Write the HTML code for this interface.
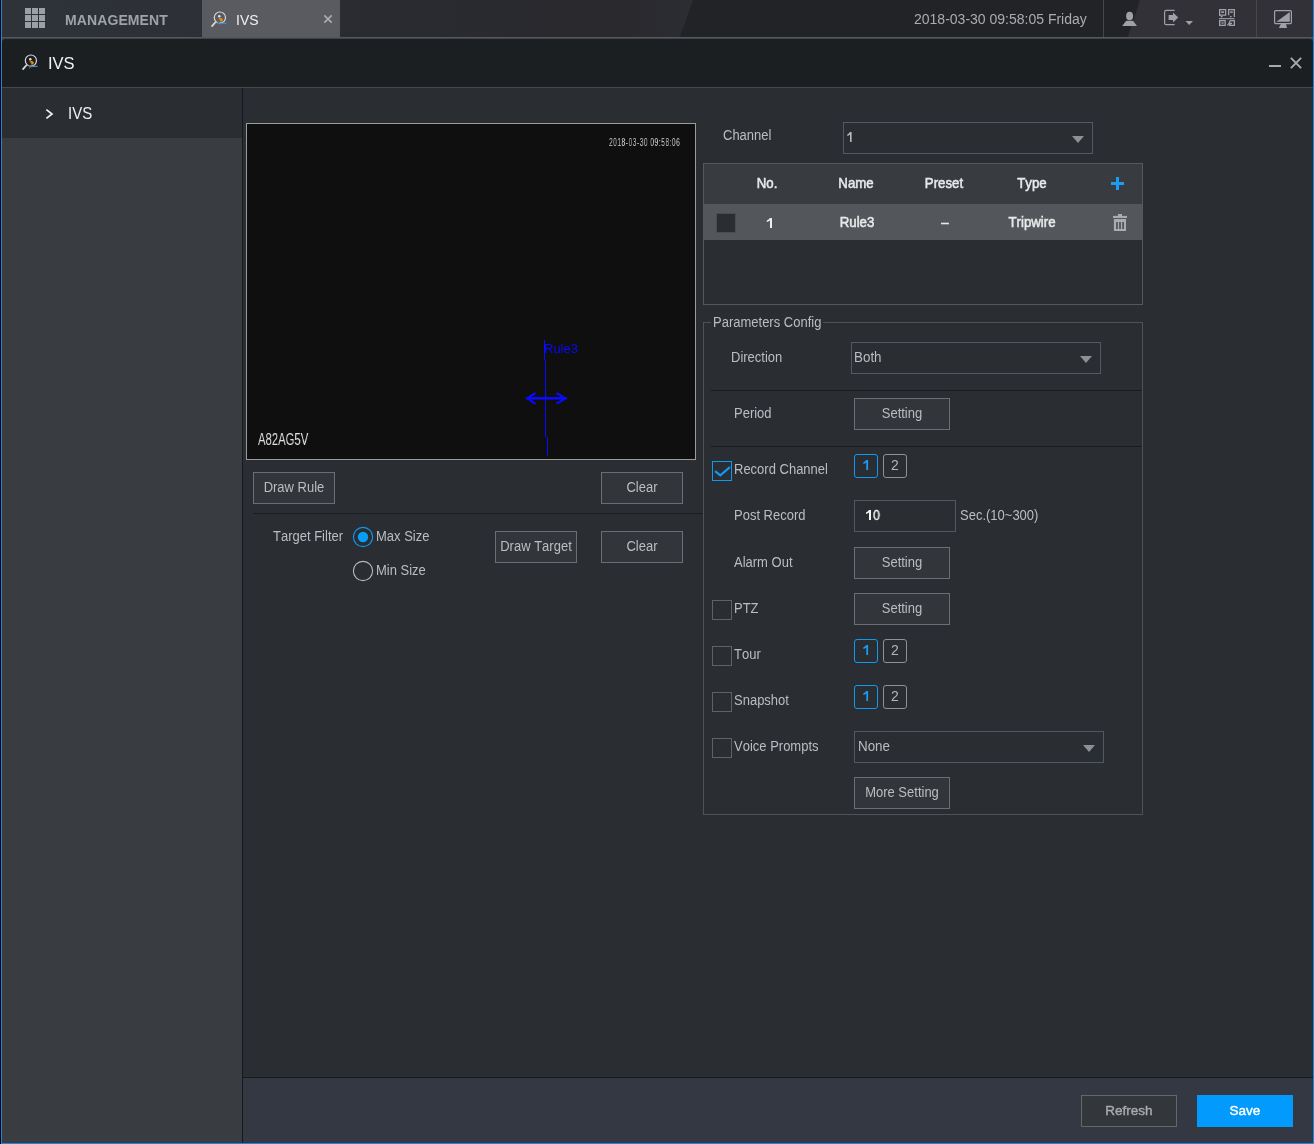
<!DOCTYPE html>
<html><head><meta charset="utf-8">
<style>
*{margin:0;padding:0;box-sizing:border-box}
html,body{width:1314px;height:1144px;overflow:hidden;background:#000;font-family:"Liberation Sans",sans-serif}
body{-webkit-font-smoothing:antialiased;font-kerning:none}
.lbl,.btn,.sel,.hd,.cb,.a{will-change:transform}
.a{position:absolute}
#frame{position:absolute;left:1px;top:0;width:1313px;height:1144px;border-left:1px solid #1a86dc;border-right:1px solid #1a86dc;border-bottom:1px solid #1a86dc;background:#2a2d32}
#topline{position:absolute;left:2px;top:37px;width:1311px;height:1px;background:#55575b}
#topline2{position:absolute;left:2px;top:38px;width:1311px;height:4px;background:#40454c}
#modal{position:absolute;left:2px;top:39px;width:1311px;height:1104px;background:#2a2d32;border-radius:4px 4px 0 0;overflow:hidden}
#mhead{position:absolute;left:0;top:0;width:1311px;height:48px;background:#1c1f22}
#mline{position:absolute;left:0;top:48px;width:1311px;height:1px;background:#45484d}
#side{position:absolute;left:0;top:49px;width:240px;height:1055px;background:#393c41}
#sideitem{position:absolute;left:0;top:49px;width:240px;height:50px;background:#2a2d32}
#vdiv{position:absolute;left:240px;top:49px;width:1px;height:1055px;background:#15181e}
#footer{position:absolute;left:241px;top:1038px;width:1070px;height:66px;background:#343842;border-top:1px solid #151a22}
.lbl{position:absolute;color:#babdc2;font-size:13px;white-space:nowrap;line-height:15px;transform:scaleY(1.1);transform-origin:0 12px}
.btn{position:absolute;background:#32363b;border:1px solid #6b6e74;color:#babdc2;font-size:13px;text-align:center;white-space:nowrap}
.btn span{display:inline-block;line-height:30px;transform:scaleY(1.1);transform-origin:50% 19.5px}
.sel span{display:inline-block;line-height:30px;transform:scale(1.03,1.1);transform-origin:0 19.5px}
.sel{position:absolute;background:#2a2d32;border:1px solid #525862;color:#babdc2;font-size:13px;white-space:nowrap}
.sel .arr{position:absolute;width:0;height:0;border-left:6px solid transparent;border-right:6px solid transparent;border-top:7px solid #8d9095}
.chk{position:absolute;width:20px;height:20px;border:1px solid #5e6166}
.cb{position:absolute;width:24px;height:24px;border:1px solid #8e9196;border-radius:3px;color:#b3b6bb;font-size:14px;text-align:center;line-height:20px}
.cb.on{border-color:#0e9af2;color:#0e9af2}
.hd{position:absolute;color:#e8e9ea;font-size:13.25px;-webkit-text-stroke:0.5px #e8e9ea;white-space:nowrap;line-height:16px;text-align:center;transform:scaleY(1.1);transform-origin:50% 12.6px}
</style></head><body>
<div id="frame"></div>
<!-- top bar -->
<svg class="a" style="left:2px;top:0" width="1311" height="37">
  <rect x="0" y="0" width="1311" height="37" fill="#2b2d33"/>
  <defs><linearGradient id="tg" x1="0" x2="1" y1="0" y2="0"><stop offset="0" stop-color="#2e333a"/><stop offset="0.28" stop-color="#2d3036"/><stop offset="0.55" stop-color="#2a2b30"/><stop offset="0.9" stop-color="#29292e"/><stop offset="1" stop-color="#2c2d32"/></linearGradient></defs>
  <polygon points="0,0 691,0 678,37 0,37" fill="url(#tg)"/>
  <polygon points="691,0 1138,0 1126,37 678,37" fill="#222327"/>
  <polygon points="1138,0 1311,0 1311,37 1126,37" fill="#313137"/>
  <rect x="200" y="0" width="138" height="37" fill="#5a5b60"/>
  <rect x="1101" y="0" width="1" height="37" fill="#45474b"/>
  <rect x="1254" y="0" width="1" height="37" fill="#45474b"/>
</svg>
<svg class="a" style="left:25px;top:8px" width="21" height="21">
  <g fill="#9c9fa5">
  <rect x="0" y="0" width="6" height="6"/><rect x="7" y="0" width="6" height="6"/><rect x="14" y="0" width="6" height="6"/>
  <rect x="0" y="7" width="6" height="6"/><rect x="7" y="7" width="6" height="6"/><rect x="14" y="7" width="6" height="6"/>
  <rect x="0" y="14" width="6" height="6"/><rect x="7" y="14" width="6" height="6"/><rect x="14" y="14" width="6" height="6"/>
  </g>
</svg>
<div class="a" style="left:65px;top:12px;font-size:14px;font-weight:bold;color:#9fa3a9;line-height:16px;letter-spacing:0.1px">MANAGEMENT</div>
<svg class="a" style="left:210px;top:11px" width="18" height="18" viewBox="0 0 18 18">
  <circle cx="9.9" cy="6.6" r="5.6" fill="none" stroke="#d8d8d8" stroke-width="1.2"/>
  <line x1="5.6" y1="11" x2="1.6" y2="15.6" stroke="#d8d8d8" stroke-width="1.8"/>
  <circle cx="9.3" cy="5.3" r="1.2" fill="#e8e8e8"/>
  <path d="M8.2 8 L10 7 Q12.5 6.6 12.8 8.8 Q12.6 10.6 10.8 10.8 L9.8 9.6 L11 8.9 Z" fill="#f39000"/>
  <path d="M8.8 13 L12 12.4 L16.5 12.4" stroke="#3a8cd0" stroke-width="1.1" fill="none"/>
  <path d="M7.5 11.5 H9.5 M8.5 12.5 V15" stroke="#555" stroke-width="0.8"/>
</svg>
<div class="a" style="left:236px;top:12px;font-size:14px;color:#f0f0f0;line-height:16px;transform:scaleY(1.08);transform-origin:0 13px">IVS</div>
<svg class="a" style="left:323px;top:14px" width="10" height="10" viewBox="0 0 10 10">
  <path d="M1.3 1.3 L8.7 8.7 M8.7 1.3 L1.3 8.7" stroke="#a9abae" stroke-width="1.7"/>
</svg>
<div class="a" style="left:914px;top:11px;font-size:14px;color:#a9acb0;line-height:16px">2018-03-30 09:58:05 Friday</div>
<!-- user icon -->
<svg class="a" style="left:1121px;top:11px" width="17" height="16" viewBox="0 0 17 16">
  <ellipse cx="8.6" cy="5" rx="3.5" ry="4.3" fill="#9ea1a7"/>
  <path d="M1.2 15 L4.6 10.4 Q5 9.8 5.8 9.8 H11.4 Q12.2 9.8 12.6 10.4 L16 15 Z" fill="#9ea1a7"/>
</svg>
<!-- logout icon -->
<svg class="a" style="left:1163px;top:9px" width="32" height="17" viewBox="0 0 32 17">
  <path d="M11.6 1.4 H3.2 Q1.6 1.4 1.6 3 V14 Q1.6 15.6 3.2 15.6 H11.6" fill="none" stroke="#9ea1a7" stroke-width="1.2"/>
  <path d="M5.6 6.1 H10 V3.6 L15.2 8.5 L10 13.4 V10.9 H5.6 Z" fill="#9ea1a7"/>
  <path d="M22.5 12 L30 12 L26.2 16 Z" fill="#9ea1a7"/>
</svg>
<!-- qr icon -->
<svg class="a" style="left:1219px;top:9px" width="16" height="17" viewBox="0 0 16 17">
  <g fill="none" stroke="#9ea1a7" stroke-width="1.3">
    <path d="M0.65 7 V0.65 H6.65 V6.2 H0.65"/>
    <path d="M9.65 6.2 V0.65 H15.35 V8"/>
    <rect x="0.65" y="11.65" width="5.5" height="4.7"/>
    <path d="M11 11.65 H15.35 V16.35 H10.65 V11.65"/>
    <path d="M8.5 16.3 L10 14.5 H13"/>
  </g>
  <g fill="#9ea1a7">
    <rect x="2.2" y="2.3" width="2.8" height="1.6"/><rect x="11.2" y="2.3" width="2.5" height="1.6"/>
    <rect x="2.3" y="13.4" width="2.4" height="1.2"/>
    <polygon points="1.2,7 4,7 2.6,8.8"/><polygon points="10.6,7 13,7 11.8,8.8"/>
    <rect x="0" y="9.1" width="15.5" height="1.1"/>
  </g>
</svg>
<!-- monitor icon -->
<svg class="a" style="left:1274px;top:10px" width="19" height="19" viewBox="0 0 19 19">
  <rect x="0.6" y="0.6" width="16.8" height="13" rx="1" fill="none" stroke="#9ea1a7" stroke-width="1.2"/>
  <polygon points="2.4,11.8 15.8,1.9 15.8,11.8" fill="#9ea1a7"/>
  <polygon points="6.8,14 12,14 13,18 4.9,18" fill="#9ea1a7"/>
</svg>
<div id="topline"></div>
<div id="topline2"></div>

<div id="modal">
  <div id="mhead"></div>
  <div id="mline"></div>
  <div id="side"></div>
  <div id="sideitem"></div>
  <div id="vdiv"></div>
  <div id="footer"></div>
</div>

<!-- modal header content (page coords) -->
<svg class="a" style="left:21px;top:54px" width="18" height="18" viewBox="0 0 18 18">
  <circle cx="9.9" cy="6.6" r="5.6" fill="none" stroke="#d8d8d8" stroke-width="1.2"/>
  <line x1="5.6" y1="11" x2="1.6" y2="15.6" stroke="#d8d8d8" stroke-width="1.8"/>
  <circle cx="9.3" cy="5.3" r="1.2" fill="#e8e8e8"/>
  <path d="M8.2 8 L10 7 Q12.5 6.6 12.8 8.8 Q12.6 10.6 10.8 10.8 L9.8 9.6 L11 8.9 Z" fill="#f39000"/>
  <path d="M8.8 13 L12 12.4 L16.5 12.4" stroke="#3a8cd0" stroke-width="1.1" fill="none"/>
  <path d="M7.5 11.5 H9.5 M8.5 12.5 V15" stroke="#555" stroke-width="0.8"/>
</svg>
<div class="a" style="left:47.5px;top:55px;font-size:16px;color:#f2f2f2;line-height:18px;transform:scale(1.03,1.08);transform-origin:0 15px">IVS</div>
<div class="a" style="left:1269px;top:65px;width:12px;height:2px;background:#a9a9a9"></div>
<svg class="a" style="left:1290px;top:57px" width="12" height="12" viewBox="0 0 12 12">
  <path d="M0.9 0.9 L11.1 11.1 M11.1 0.9 L0.9 11.1" stroke="#a9a9a9" stroke-width="2"/>
</svg>

<!-- sidebar -->
<svg class="a" style="left:45px;top:108px" width="9" height="12" viewBox="0 0 9 12">
  <path d="M1.4 1.6 L7 6 L1.4 10.4" fill="none" stroke="#f0f0f0" stroke-width="1.7"/>
</svg>
<div class="a" style="left:68px;top:104.6px;font-size:15px;color:#f0f0f0;line-height:17px;transform:scaleY(1.08);transform-origin:0 14px">IVS</div>


<!-- video -->
<div class="a" style="left:246px;top:123px;width:450px;height:337px;background:#0f0f0f;border:1px solid #9b9b9b"></div>
<div class="a" style="left:608.8px;top:137px;font-size:10px;line-height:11px;color:#cfcfcf;letter-spacing:0.8px;transform:scaleX(0.66);transform-origin:0 0;white-space:nowrap">2018-03-30 09:58:06</div>
<div class="a" style="left:257.5px;top:430px;font-size:17px;line-height:19px;color:#e0e0e0;transform:scaleX(0.665);transform-origin:0 0;white-space:nowrap">A82AG5V</div>
<svg class="a" style="left:0;top:0" width="700" height="470">
  <g fill="#0a0aff">
  <rect x="544" y="340" width="1" height="20"/>
  <rect x="545" y="360" width="1" height="77"/>
  <rect x="547" y="437" width="1" height="19"/>
  <rect x="526.5" y="397" width="40" height="2.6"/>
  </g>
  <path d="M534.5 393.6 L527.5 398.3 L534.5 403.2" fill="none" stroke="#0a0aff" stroke-width="2.2" stroke-linecap="square"/>
  <path d="M557.5 393.6 L565.5 398.3 L557.5 403.2" fill="none" stroke="#0a0aff" stroke-width="2.2" stroke-linecap="square"/>
</svg>
<div class="a" style="left:544px;top:341px;font-size:13px;line-height:15px;color:#0808ff;white-space:nowrap">Rule3</div>

<div class="btn" style="left:253px;top:472px;width:82px;height:32px;line-height:30px"><span>Draw Rule</span></div>
<div class="btn" style="left:601px;top:472px;width:82px;height:32px;line-height:30px"><span>Clear</span></div>
<div class="a" style="left:253px;top:513px;width:450px;height:1px;background:#1a1d22"></div>
<div class="lbl" style="left:273px;top:529px">Target Filter</div>
<svg class="a" style="left:352px;top:526px" width="22" height="22" viewBox="0 0 22 22">
  <circle cx="11" cy="11" r="9.6" fill="none" stroke="#0e9af2" stroke-width="1.1"/>
  <circle cx="11" cy="11" r="5.2" fill="#079ef8"/>
</svg>
<div class="lbl" style="left:376px;top:529px">Max Size</div>
<svg class="a" style="left:352px;top:560px" width="22" height="22" viewBox="0 0 22 22">
  <circle cx="11" cy="11" r="9.6" fill="none" stroke="#b5b7ba" stroke-width="1.1"/>
</svg>
<div class="lbl" style="left:376px;top:563px">Min Size</div>
<div class="btn" style="left:495px;top:531px;width:82px;height:32px;line-height:30px"><span>Draw Target</span></div>
<div class="btn" style="left:601px;top:531px;width:82px;height:32px;line-height:30px"><span>Clear</span></div>

<!-- channel -->
<div class="lbl" style="left:723px;top:128px">Channel</div>
<div class="sel" style="left:843px;top:122px;width:250px;height:32px;line-height:30px;padding-left:3px"><div class="arr" style="left:228px;top:13px"></div></div>
<svg class="a" style="left:845.7px;top:131px" width="8" height="12" viewBox="-4 -1 8 12"><path d="M0 0 H1.6 V10 H0 V2.50 Q-1.40 3.50 -2.7 4.00 V2.60 Q-1.20 1.80 0 0 Z" fill="#b8bbc0"/></svg>

<!-- table -->
<div class="a" style="left:703px;top:163px;width:440px;height:142px;border:1px solid #55585d;background:#2a2d32"></div>
<div class="a" style="left:704px;top:164px;width:438px;height:40px;background:#383b40"></div>
<div class="a" style="left:704px;top:204px;width:438px;height:36px;background:#53565b"></div>
<div class="hd" style="left:737px;top:176px;width:60px">No.</div>
<div class="hd" style="left:816px;top:176px;width:80px">Name</div>
<div class="hd" style="left:904px;top:176px;width:80px">Preset</div>
<div class="hd" style="left:992px;top:176px;width:80px">Type</div>
<svg class="a" style="left:1111px;top:177px" width="13" height="13"><rect x="5" y="0" width="3" height="13" fill="#1a9ef0"/><rect x="0" y="5" width="13" height="3" fill="#1a9ef0"/></svg>
<div class="a" style="left:716px;top:213px;width:20px;height:20px;background:#2a2d32;border:1px solid #494c51"></div>
<svg class="a" style="left:766.3px;top:216.8px" width="8" height="12" viewBox="-4 -1 8 12"><path d="M0 0 H2.0 V10 H0 V2.50 Q-1.60 3.50 -3.2 4.00 V2.60 Q-1.40 1.80 0 0 Z" fill="#eeeeee"/></svg>
<div class="hd" style="left:817px;top:215px;width:80px">Rule3</div>
<div class="hd" style="left:905px;top:215px;width:80px">&ndash;</div>
<div class="hd" style="left:992px;top:215px;width:80px">Tripwire</div>
<svg class="a" style="left:1113px;top:214px" width="15" height="18" viewBox="0 0 15 18">
  <rect x="4.9" y="0" width="4.1" height="2" fill="#a9acb1"/>
  <rect x="0" y="1.9" width="14" height="2.1" fill="#a9acb1"/>
  <path d="M0.9 5.1 H13 V17 H0.9 Z M3.1 8 V14.9 H4.9 V8 Z M6.1 8 V14.9 H7.9 V8 Z M9.2 8 V14.9 H11 V8 Z" fill="#a9acb1" fill-rule="evenodd"/>
</svg>

<!-- fieldset -->
<div class="a" style="left:703px;top:322px;width:440px;height:493px;border:1px solid #4f5257"></div>
<div class="a" style="left:711px;top:314px;width:112px;height:16px;background:#2a2d32"></div>
<div class="lbl" style="left:713px;top:315px">Parameters Config</div>

<div class="lbl" style="left:731px;top:350px">Direction</div>
<div class="sel" style="left:851px;top:342px;width:250px;height:32px;line-height:30px;padding-left:2px"><span>Both</span><div class="arr" style="left:228px;top:13px"></div></div>
<div class="a" style="left:711px;top:390px;width:431px;height:1px;background:#181b20"></div>
<div class="lbl" style="left:734px;top:406px">Period</div>
<div class="btn" style="left:854px;top:398px;width:96px;height:32px;line-height:30px"><span>Setting</span></div>
<div class="a" style="left:711px;top:446px;width:431px;height:1px;background:#181b20"></div>

<div class="a" style="left:712px;top:461px;width:20px;height:20px;border:1px solid #0e9af2"></div>
<svg class="a" style="left:712px;top:461px" width="20" height="20" viewBox="0 0 20 20"><path d="M3.1 10.1 L8.3 14.3 L17.9 6.1" fill="none" stroke="#0e9cf6" stroke-width="2.1"/></svg>
<div class="lbl" style="left:734px;top:462px">Record Channel</div>
<div class="cb on" style="left:854px;top:454px"><svg style="position:absolute;left:-1px;top:-1px" width="24" height="24" viewBox="0 0 24 24"><path d="M12.3 6 H14.1 V16 H12.3 V8.4 Q10.9 9.5 9.3 10 V8.5 Q11.3 7.4 12.3 6 Z" fill="#1a9cf0"/></svg></div>
<div class="cb" style="left:883px;top:454px">2</div>

<div class="lbl" style="left:734px;top:508px">Post Record</div>
<div class="a" style="left:854px;top:500px;width:102px;height:32px;border:1px solid #525862;background:#2a2d32"></div>
<div class="a" style="left:872.8px;top:507px;color:#f0f0f0;font-size:14px;line-height:16px;-webkit-text-stroke:0.35px #f0f0f0;transform:scaleX(0.9);transform-origin:0 0">0</div>
<svg class="a" style="left:864.5px;top:509px" width="8" height="12" viewBox="-4 -1 8 12"><path d="M0 0 H2.0 V10 H0 V2.50 Q-1.60 3.50 -3.0 4.00 V2.60 Q-1.40 1.80 0 0 Z" fill="#f4f4f4"/></svg>
<div class="lbl" style="left:960px;top:508px">Sec.(10~300)</div>

<div class="lbl" style="left:734px;top:555px">Alarm Out</div>
<div class="btn" style="left:854px;top:547px;width:96px;height:32px;line-height:30px"><span>Setting</span></div>

<div class="chk" style="left:712px;top:600px"></div>
<div class="lbl" style="left:734px;top:601px">PTZ</div>
<div class="btn" style="left:854px;top:593px;width:96px;height:32px;line-height:30px"><span>Setting</span></div>

<div class="chk" style="left:712px;top:646px"></div>
<div class="lbl" style="left:734px;top:647px">Tour</div>
<div class="cb on" style="left:854px;top:639px"><svg style="position:absolute;left:-1px;top:-1px" width="24" height="24" viewBox="0 0 24 24"><path d="M12.3 6 H14.1 V16 H12.3 V8.4 Q10.9 9.5 9.3 10 V8.5 Q11.3 7.4 12.3 6 Z" fill="#1a9cf0"/></svg></div>
<div class="cb" style="left:883px;top:639px">2</div>

<div class="chk" style="left:712px;top:692px"></div>
<div class="lbl" style="left:734px;top:693px">Snapshot</div>
<div class="cb on" style="left:854px;top:685px"><svg style="position:absolute;left:-1px;top:-1px" width="24" height="24" viewBox="0 0 24 24"><path d="M12.3 6 H14.1 V16 H12.3 V8.4 Q10.9 9.5 9.3 10 V8.5 Q11.3 7.4 12.3 6 Z" fill="#1a9cf0"/></svg></div>
<div class="cb" style="left:883px;top:685px">2</div>

<div class="chk" style="left:712px;top:738px"></div>
<div class="lbl" style="left:734px;top:739px">Voice Prompts</div>
<div class="sel" style="left:854px;top:731px;width:250px;height:32px;line-height:30px;padding-left:3px"><span>None</span><div class="arr" style="left:228px;top:13px"></div></div>

<div class="btn" style="left:854px;top:777px;width:96px;height:32px;line-height:30px"><span>More Setting</span></div>

<!-- footer buttons -->
<div class="a" style="left:1081px;top:1095px;width:96px;height:32px;border:1px solid #64676b;background:#33373c;color:#a9abaf;font-size:13.5px;-webkit-text-stroke:0.4px #a9abaf;text-align:center;line-height:30px">Refresh</div>
<div class="a" style="left:1197px;top:1095px;width:96px;height:32px;background:#039afd;color:#fff;font-size:13.5px;-webkit-text-stroke:0.4px #fff;text-align:center;line-height:31px">Save</div>

</body></html>
